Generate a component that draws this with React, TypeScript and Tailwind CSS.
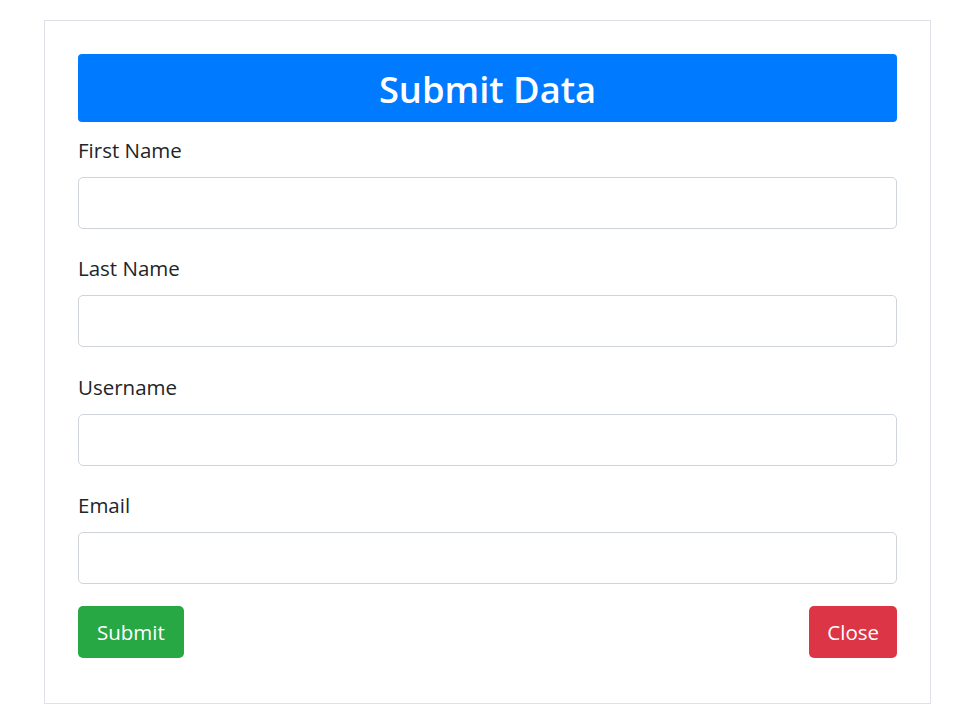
import React from "react";

const fields = ["First Name", "Last Name", "Username", "Email"];

export default function App() {
  return (
    <div className="min-h-screen bg-white" style={{ fontFamily: '"Open Sans", "Noto Sans", sans-serif' }}>
      <div className="pt-[20px] pl-[44px]">
        <div className="w-[887px] border border-[#dee2e6] px-[33px] pt-[33px] pb-[45px]">
          <div className="h-[68px] rounded-[4px] bg-[#007bff] flex items-center justify-center">
            <h1 className="text-[36.3px] font-semibold text-white leading-none pt-[2px]">Submit Data</h1>
          </div>
          {fields.map((f, i) => (
            <div key={f} className={i === 0 ? "mt-[11px]" : "mt-[22.4px]"}>
              <label className="block text-[20.5px] leading-[30px] text-[#212529] pt-[2px] mb-[12px]">{f}</label>
              <input
                type="text"
                className="block w-full h-[52px] rounded-[5px] border border-[#ced4da] bg-white px-3 outline-none"
              />
            </div>
          ))}
          <div className="mt-[22px] flex justify-between">
            <button className="h-[52px] px-[19px] pt-[1px] rounded-[5px] bg-[#28a745] text-white text-[20.5px]">Submit</button>
            <button className="h-[52px] px-[18px] pt-[1px] rounded-[5px] bg-[#dc3545] text-white text-[20.5px]">Close</button>
          </div>
        </div>
      </div>
    </div>
  );
}
